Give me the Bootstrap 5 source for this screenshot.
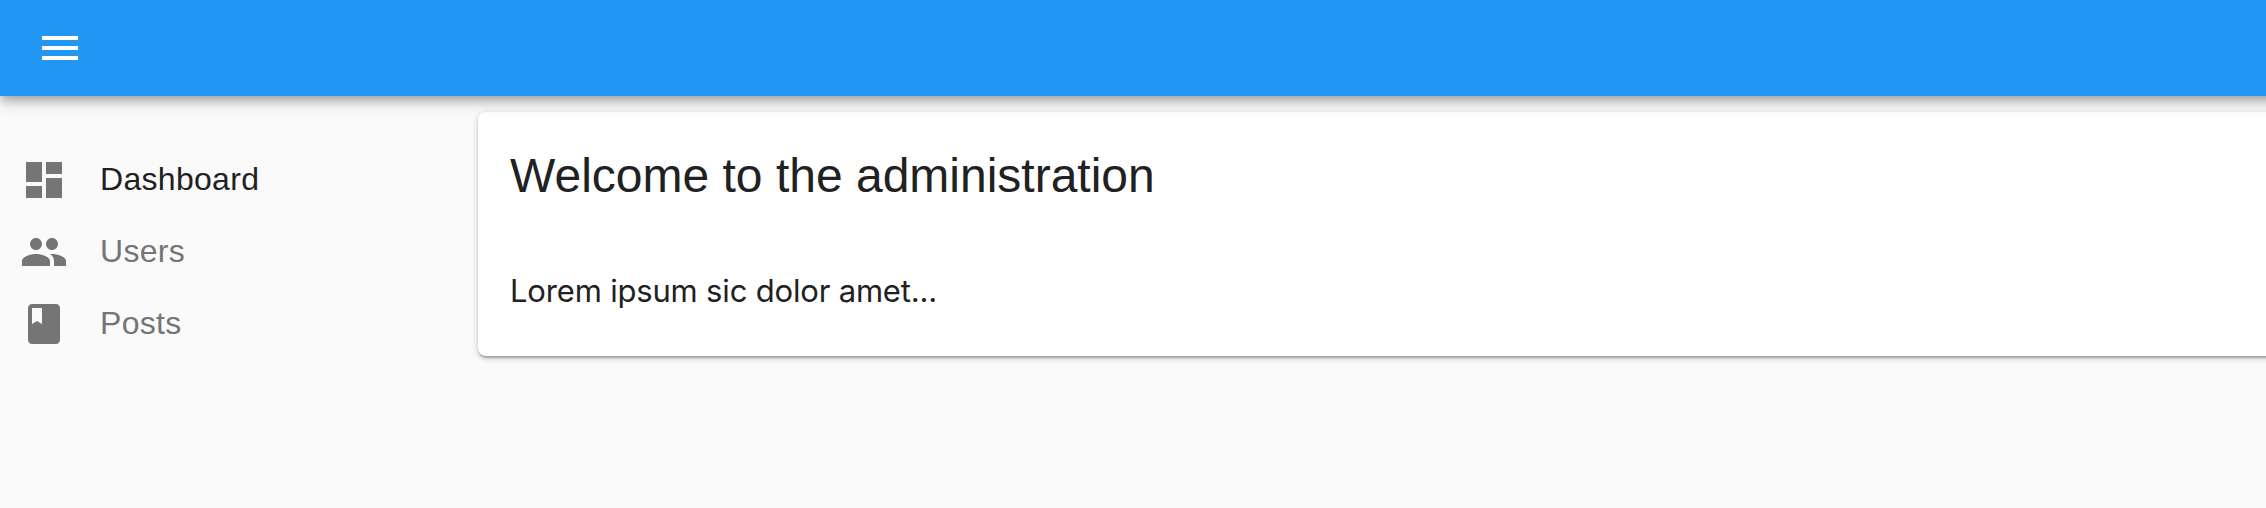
<!DOCTYPE html>
<html lang="en">
<head>
<meta charset="utf-8">
<meta name="viewport" content="width=device-width, initial-scale=1">
<title>Administration</title>
<link rel="stylesheet" href="https://cdn.jsdelivr.net/npm/bootstrap@5.3.0/dist/css/bootstrap.min.css">
<style>
  body { background: #fafafa; color: #212121; font-family: "Liberation Sans", Arial, sans-serif; font-size: 32px; }
  svg { width: 48px; height: 48px; fill: currentColor; flex: none; display: block; }
  .app-bar { height: 96px; margin-right: -24px; background: #2196f3; padding: 0 36px; z-index: 2;
    box-shadow: 0 4px 8px -2px rgba(0,0,0,.2), 0 8px 10px 0 rgba(0,0,0,.14), 0 2px 20px 0 rgba(0,0,0,.12); }
  .app-bar .btn { border: 0; color: #fff; }
  .side-menu { width: 478px; padding-top: 48px; }
  .side-menu .nav-link { height: 72px; padding: 0 20px; gap: 32px; color: #757575; line-height: 48px; }
  .side-menu .nav-link.active { color: #212121; }
  .side-menu span { padding-bottom: 2px; letter-spacing: .3px; }
  .side-menu svg { color: #757575; }
  .panel { height: 244px; margin-top: 16px; margin-right: -16px; border: 0; border-radius: 8px; color: #212121;
    box-shadow: 0 2px 6px 0 rgba(0,0,0,.2), 0 2px 2px 0 rgba(0,0,0,.14), 0 4px 2px -2px rgba(0,0,0,.12); }
  .panel-head { padding: 32px 32px 0; font-size: 48px; line-height: 64px; font-weight: 400; margin: 0; }
  .panel-text { padding: 59px 32px 0; font-family: Inter, sans-serif; font-size: 31px; line-height: 48px; letter-spacing: -.18px; margin: 0; }
</style>
</head>
<body class="overflow-hidden vh-100">
<header class="app-bar navbar position-relative">
  <button class="btn p-0" type="button" aria-label="Menu">
    <svg viewBox="0 0 24 24"><path d="M3 18h18v-2H3v2zm0-5h18v-2H3v2zm0-7v2h18V6H3z"/></svg>
  </button>
</header>
<div class="d-flex">
  <nav class="side-menu nav flex-column flex-shrink-0">
    <a class="nav-link active d-flex align-items-center" href="#">
      <svg viewBox="0 0 24 24"><path d="M3 13h8V3H3v10zm0 8h8v-6H3v6zm10 0h8V11h-8v10zm0-18v6h8V3h-8z"/></svg>
      <span>Dashboard</span>
    </a>
    <a class="nav-link d-flex align-items-center" href="#">
      <svg viewBox="0 0 24 24"><path d="M16 11c1.660 0 2.990-1.340 2.990-3S17.660 5 16 5c-1.660 0-3 1.340-3 3s1.340 3 3 3zm-8 0c1.660 0 2.990-1.340 2.990-3S9.660 5 8 5C6.340 5 5 6.340 5 8s1.340 3 3 3zm0 2c-2.330 0-7 1.170-7 3.500V19h14v-2.500c0-2.330-4.670-3.500-7-3.500zm8 0c-.29 0-.62.020-.97.050 1.160.84 1.970 1.970 1.970 3.450V19h6v-2.500c0-2.330-4.670-3.500-7-3.500z"/></svg>
      <span>Users</span>
    </a>
    <a class="nav-link d-flex align-items-center" href="#">
      <svg viewBox="0 0 24 24"><path d="M18 2H6c-1.100 0-2 .9-2 2v16c0 1.100.9 2 2 2h12c1.100 0 2-.9 2-2V4c0-1.100-.9-2-2-2zM6 4h5v8l-2.500-1.500L6 12V4z"/></svg>
      <span>Posts</span>
    </a>
  </nav>
  <main class="flex-grow-1">
    <section class="panel card">
      <h1 class="panel-head">Welcome to the administration</h1>
      <p class="panel-text">Lorem ipsum sic dolor amet...</p>
    </section>
  </main>
</div>
<script src="https://cdn.jsdelivr.net/npm/bootstrap@5.3.0/dist/js/bootstrap.bundle.min.js"></script>
</body>
</html>
